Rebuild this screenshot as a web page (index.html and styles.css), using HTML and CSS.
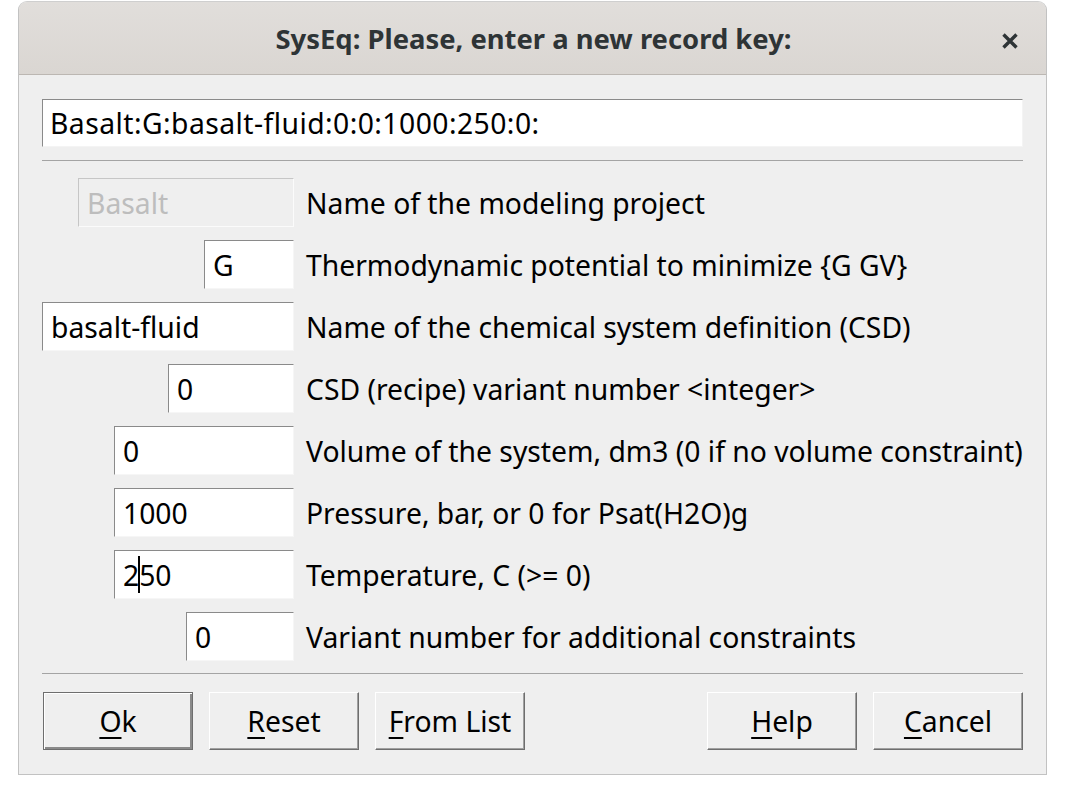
FILE: index.html
```html
<!DOCTYPE html>
<html lang="en">
<head>
<meta charset="utf-8">
<title>SysEq: Please, enter a new record key:</title>
<link rel="stylesheet" href="styles.css">
</head>
<body>
<div class="window">
  <header class="titlebar">
    <span class="title">SysEq: Please, enter a new record key:</span>
    <span class="close" aria-label="Close">
      <svg width="18" height="18" viewBox="0 0 18 18"><path d="M2.5 2.5 L15.5 15.5 M15.5 2.5 L2.5 15.5" stroke="#2e3436" stroke-width="3.4" stroke-linecap="butt" fill="none"/></svg>
    </span>
  </header>
  <main class="content">
    <div class="keyfield">Basalt:G:basalt-fluid:0:0:1000:250:0:</div>
    <div class="sep"></div>
    <div class="rows">
      <div class="cell"><div class="field disabled w216">Basalt</div></div>
      <span class="label">Name of the modeling project</span>

      <div class="cell"><div class="field w90">G</div></div>
      <span class="label">Thermodynamic potential to minimize {G GV}</span>

      <div class="cell"><div class="field w252">basalt-fluid</div></div>
      <span class="label">Name of the chemical system definition (CSD)</span>

      <div class="cell"><div class="field w126">0</div></div>
      <span class="label">CSD (recipe) variant number &lt;integer&gt;</span>

      <div class="cell"><div class="field w180">0</div></div>
      <span class="label">Volume of the system, dm3 (0 if no volume constraint)</span>

      <div class="cell"><div class="field w180">1000</div></div>
      <span class="label">Pressure, bar, or 0 for Psat(H2O)g</span>

      <div class="cell"><div class="field w180">2<span class="caret"></span>50</div></div>
      <span class="label">Temperature, C (&gt;= 0)</span>

      <div class="cell"><div class="field w108">0</div></div>
      <span class="label">Variant number for additional constraints</span>
    </div>
    <div class="sep sep2"></div>
    <div class="buttons">
      <div class="group">
        <button class="btn default"><u>O</u>k</button>
        <button class="btn"><u>R</u>eset</button>
        <button class="btn"><u>F</u>rom List</button>
      </div>
      <div class="group">
        <button class="btn"><u>H</u>elp</button>
        <button class="btn"><u>C</u>ancel</button>
      </div>
    </div>
  </main>
</div>
</body>
</html>
```
FILE: styles.css
```css
html, body {
  margin: 0;
  padding: 0;
  background: #ffffff;
}

body {
  font-family: "Noto Sans", "DejaVu Sans", sans-serif;
  font-size: 28.3px;
  color: #000;
}

.window {
  margin: 1px 0 0 18px;
  width: 1029px;
  box-sizing: border-box;
  border: 1px solid #c2c2c2;
  border-top-color: #cfcfcf;
  border-radius: 9px 9px 0 0;
  background: #efefef;
  overflow: hidden;
}

.titlebar {
  height: 72px;
  border-bottom: 1px solid #bcb7b2;
  background: linear-gradient(#e1dedb, #dad6d2);
  display: flex;
  align-items: center;
  justify-content: center;
  position: relative;
}

.title {
  font-family: "Noto Sans", sans-serif;
  font-weight: bold;
  font-size: 27.4px;
  color: #2e3436;
  margin-top: 1px;
  margin-left: 2px;
}

.close {
  position: absolute;
  right: 27px;
  top: 30px;
  width: 18px;
  height: 18px;
  display: block;
}

.close svg {
  display: block;
}

.content {
  padding: 24px 23px 24px 23px;
}

.keyfield {
  height: 48px;
  box-sizing: border-box;
  background: #fff;
  border: 1px solid;
  border-color: #8a8a8a #f4f4f4 #f4f4f4 #8a8a8a;
  padding-left: 7px;
  display: flex;
  align-items: center;
  white-space: nowrap;
  letter-spacing: 0.45px;
}

.sep {
  height: 1px;
  background: #a4a4a4;
  margin-top: 13px;
}

.rows {
  margin-top: 17px;
  display: grid;
  grid-template-columns: 252px 1fr;
  column-gap: 12px;
  row-gap: 13px;
  align-items: center;
}

.cell {
  display: flex;
  justify-content: flex-end;
}

.field {
  height: 49px;
  box-sizing: border-box;
  background: #fff;
  border: 1px solid;
  border-color: #8a8a8a #f6f6f6 #f6f6f6 #8a8a8a;
  padding-left: 8px;
  display: flex;
  align-items: center;
  white-space: nowrap;
}

.field.disabled {
  background: #efefef;
  color: #bdbdbd;
  border-color: #c6c6c6 #fbfbfb #fbfbfb #c6c6c6;
}

.w90 { width: 90px; }
.w108 { width: 108px; }
.w126 { width: 126px; }
.w180 { width: 180px; }
.w216 { width: 216px; }
.w252 { width: 252px; }

.caret {
  display: inline-block;
  width: 2px;
  height: 37px;
  background: #000;
  margin: 0 -1px;
  position: relative;
  z-index: 1;
}

.label {
  white-space: nowrap;
}

.sep2 {
  margin-top: 12px;
}

.buttons {
  margin-top: 18px;
  display: flex;
  justify-content: space-between;
}

.group {
  display: flex;
  gap: 16px;
}

.btn {
  width: 150px;
  height: 58px;
  box-sizing: border-box;
  font: inherit;
  color: #000;
  background: #efefef;
  border: 1px solid;
  border-color: #ffffff #6e6e6e #6e6e6e #ffffff;
  box-shadow: inset -1px -1px 0 #a0a0a0;
  padding: 0;
  display: flex;
  align-items: center;
  justify-content: center;
}

.btn.default {
  margin-left: 1px;
  border-color: #6e6e6e;
  box-shadow: inset 1px 1px 0 #ffffff, inset -2px -2px 0 #8a8a8a;
}

.btn u {
  text-decoration-thickness: 2px;
  text-underline-offset: 5px;
}
```
